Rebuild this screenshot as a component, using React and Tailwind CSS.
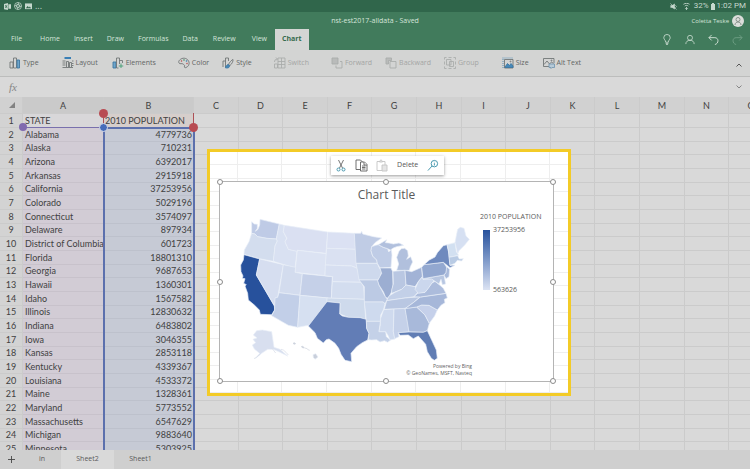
import React, { useState } from 'react';

const menus = ['File', 'Home', 'Insert', 'Draw', 'Formulas', 'Data', 'Review', 'View', 'Chart'];

const letters = ['C', 'D', 'E', 'F', 'G', 'H', 'I', 'J', 'K', 'L', 'M', 'N', 'O'];

const rows = [
  ['STATE', '2010 POPULATION'],
  ['Alabama', '4779736'],
  ['Alaska', '710231'],
  ['Arizona', '6392017'],
  ['Arkansas', '2915918'],
  ['California', '37253956'],
  ['Colorado', '5029196'],
  ['Connecticut', '3574097'],
  ['Delaware', '897934'],
  ['District of Columbia', '601723'],
  ['Florida', '18801310'],
  ['Georgia', '9687653'],
  ['Hawaii', '1360301'],
  ['Idaho', '1567582'],
  ['Illinois', '12830632'],
  ['Indiana', '6483802'],
  ['Iowa', '3046355'],
  ['Kansas', '2853118'],
  ['Kentucky', '4339367'],
  ['Louisiana', '4533372'],
  ['Maine', '1328361'],
  ['Maryland', '5773552'],
  ['Massachusetts', '6547629'],
  ['Michigan', '9883640'],
  ['Minnesota', '5303925'],
];

// [id, fill, points]
const states = [
  ['WA', '#bfcbe6', '80,35 88,42 97,43 97,55 91,64 99,58 104,45 105,28 163,42 154,87 125,85 98,80 90,72 80,70'],
  ['OR', '#d3ddee', '80,70 90,72 98,80 125,85 154,87 157,93 150,108 145,154 103,146 57,133 58,120 72,95'],
  ['CA', '#27519c', '57,134 104,147 94,195 148,288 149,300 140,314 106,313 103,300 88,285 70,270 68,250 60,228 64,224 56,220 60,206 52,205 54,198 48,185 47,165 55,150'],
  ['NV', '#d6def0', '104,147 175,164 158,262 152,263 149,288 94,195'],
  ['ID', '#d9e1f2', '163,42 178,46 175,65 185,85 180,95 190,118 216,123 210,174 145,154 150,108 157,93 154,87'],
  ['MT', '#dae0f2', '178,46 308,66 303,130 217,121 215,124 190,118 180,95 186,85 175,65'],
  ['WY', '#dce3f3', '217,121 304,131 300,197 210,187'],
  ['UT', '#d3dcee', '175,164 212,172 210,187 232,191 225,256 162,248'],
  ['CO', '#c5d0e8', '232,191 322,200 319,265 225,256'],
  ['AZ', '#c2cfe8', '162,248 225,256 218,352 190,346 140,317 149,300 149,288 150,264 158,262'],
  ['NM', '#d6e0f1', '225,256 308,264 306,275 300,349 250,346 218,352'],
  ['ND', '#dbe1f3', '308,66 388,70 392,118 305,115'],
  ['SD', '#dae1f2', '305,115 392,118 395,162 397,175 380,168 301,165'],
  ['NE', '#d7dff1', '301,165 380,168 397,175 408,217 322,215 323,200 300,197'],
  ['KS', '#d3ddef', '322,215 408,217 416,230 418,268 319,265'],
  ['OK', '#cedaec', '306,264 418,268 422,328 400,322 370,322 345,312 345,279 306,275'],
  ['TX', '#627db6', '306,275 345,279 344,312 352,318 370,322 405,323 424,328 425,355 432,370 428,390 412,398 395,410 378,430 380,455 360,451 348,433 341,415 330,400 312,387 304,389 295,399 277,385 270,368 250,348'],
  ['MN', '#c0cce5', '388,70 407,70 410,64 413,72 445,80 470,84 450,98 440,110 438,122 443,138 455,150 457,160 393,160'],
  ['IA', '#ced9ed', '393,160 457,160 462,172 470,185 465,200 458,210 402,210 397,180'],
  ['MO', '#bccae4', '402,210 458,210 462,225 470,240 478,255 487,268 480,282 475,276 418,276 418,230 410,220'],
  ['AR', '#cedaee', '418,276 475,276 480,282 475,300 467,315 466,334 424,334 422,310'],
  ['LA', '#c4d1e8', '424,334 466,334 465,345 462,365 482,365 484,380 497,390 488,397 478,392 465,396 455,389 440,390 430,389 432,370 425,355'],
  ['WI', '#bfcce6', '440,110 452,106 460,104 475,112 488,116 491,126 499,118 501,135 498,172 465,174 457,160 455,150 443,138 438,122'],
  ['IL', '#9caed2', '465,174 498,174 503,185 504,225 500,245 490,265 482,262 475,245 462,225 458,212 470,190'],
  ['MIU', '#b1c0dd', '460,104 475,95 485,89 481,98 492,99 505,102 522,99 536,106 515,110 505,114 496,120 488,116 475,112'],
  ['MIL', '#b1c0dd', '515,181 521,162 515,142 522,124 529,116 539,115 548,122 550,138 545,148 557,140 563,156 556,170 553,181'],
  ['IN', '#b9c7e2', '504,184 540,181 543,225 530,238 500,250 500,240 505,222'],
  ['OH', '#a2b3d6', '540,181 560,185 590,172 592,200 580,215 570,230 543,225'],
  ['KY', '#c3d0e8', '485,272 492,258 510,247 530,238 543,225 570,230 580,245 567,260 540,264'],
  ['TN', '#b9c7e2', '478,298 485,272 540,264 586,260 565,278 540,296'],
  ['MS', '#cfdaee', '467,325 476,299 507,297 505,365 510,387 495,390 490,378 482,365 462,365 466,345'],
  ['AL', '#c5d1e9', '507,297 540,295 553,350 552,366 520,368 522,380 509,386 505,365'],
  ['GA', '#a8b9da', '540,295 575,291 600,315 613,340 607,362 595,367 552,366'],
  ['FL', '#607db4', '520,368 552,366 595,367 607,362 620,390 634,420 637,445 628,451 619,445 607,425 602,403 580,378 565,386 550,375 525,376'],
  ['SC', '#c5d0ea', '575,291 590,285 612,286 637,300 629,318 613,340 600,315'],
  ['NC', '#a6b7d9', '540,296 565,278 586,261 663,250 667,264 658,268 660,278 648,286 637,300 612,286 590,285 575,291'],
  ['VA', '#acbcdc', '567,260 580,248 600,247 620,220 630,214 645,226 655,235 663,250 586,261'],
  ['WV', '#cbd7ed', '570,238 580,215 592,200 594,208 620,206 627,213 620,220 610,235 600,247 580,250'],
  ['MD', '#b7c6e1', '594,206 657,195 662,222 652,224 648,208 642,222 630,214 620,207'],
  ['PA', '#93a8d0', '590,172 597,164 655,157 667,175 663,188 657,195 594,206'],
  ['NJ', '#a8b9da', '665,170 674,178 672,200 663,206 657,195 663,188'],
  ['NY', '#6f8abe', '597,164 613,150 630,141 637,128 655,107 666,104 672,132 675,166 690,166 675,173 655,157'],
  ['VT', '#d2e0f1', '666,104 690,98 694,125 701,136 672,142 670,120'],
  ['MA', '#b9cbe4', '672,142 698,137 703,147 715,146 710,153 697,151 690,160 675,166'],
  ['ME', '#d6e0f2', '690,98 695,72 698,58 706,52 717,55 723,78 733,88 720,104 702,122 698,132'],
  ['AK', '#d8dfef', '85,375 95,362 112,360 140,365 147,412 165,418 188,438 165,427 145,418 128,418 110,430 92,445 104,430 88,417 82,405 92,398 84,388 96,384'],
  ['HI', '#c9cfdb', '264,434 272,431 279,441 270,448 265,442'],
];

const cell = 'border-r border-b border-[#cbcbcb] p-0 font-normal leading-[13px]';

function Icon({ children, muted }) {
  return (
    <svg viewBox="0 0 24 24" className={'h-3 w-3 shrink-0 ' + (muted ? 'text-[#a9abaa]' : 'text-[#6d7172]')} fill="none" stroke="currentColor" strokeWidth="1.7">
      {children}
    </svg>
  );
}

const icons = {
  Type: (
    <>
      <path d="M2 10h6v12H2z" />
      <path d="M9 2h6v20H9z" />
      <path d="M16 6h5v16h-5z" fill="#6fa5c9" stroke="#39749f" />
    </>
  ),
  Layout: (
    <>
      <path d="M5 2h13" stroke="#3a7fb5" strokeWidth="4" />
      <path d="M1 8h6M1 12h6M1 16h6M1 21h21M9 20V9h4v11M15 20v-9h4v9M20 8h3M20 13h3M20 17h3" />
    </>
  ),
  Elements: (
    <>
      <path d="M2 10h6v12H2z" fill="#6fa5c9" stroke="#39749f" />
      <path d="M9 22V2h6v12M9 22h4M15 7h6v5" />
      <path d="M18 13v9M13.500 18h9" stroke="#3f9970" />
    </>
  ),
  Color: (
    <>
      <path d="M13 18c-1 3 1 4 3 3 5-2 7-6 6-11C20 4 14 1 8 3 3 5 0 9 2 12s6 0 8 2c1 1 4 2 3 4z" />
      <circle cx="7" cy="8" r="1" stroke="#ba5959" />
      <circle cx="12" cy="6" r="1" stroke="#4f9a72" />
      <circle cx="17" cy="8" r="1" stroke="#4584b4" />
      <circle cx="18" cy="13" r="1" stroke="#ba5959" />
    </>
  ),
  Style: (
    <>
      <path d="M2 20V8h5M7 20V2h6v6" />
      <path d="M22 5c-2 0-8 7-9 10l3 2c3-2 7-9 6-12z" />
      <path d="M12 15c-3 0-3 5-6 6 4 2 10 1 9-4z" fill="#4689b9" stroke="#39749f" />
    </>
  ),
  Switch: (
    <>
      <path d="M8 2h14v20H8zM8 9h14M8 15h14M15 2v20" />
      <path d="M1 22h6v-8H1zM1 10c0-4 2-6 6-6M4 1l3 3-3 3" />
    </>
  ),
  Forward: (
    <>
      <path d="M2 2h12v12H2z" fill="#b9bbba" />
      <path d="M18 9h4v13H10v-5" />
    </>
  ),
  Backward: (
    <>
      <path d="M2 2h11v5H7v7H2z" fill="#b9bbba" />
      <path d="M10 9h12v13H10z" />
    </>
  ),
  Group: (
    <>
      <path d="M5 5h9v11H5zM11 9h8v10h-8z" />
      <path d="M1 5V1h4M19 1h4v4M23 19v4h-4M5 23H1v-4M9 1h6M9 23h6M1 9v6M23 9v6" />
    </>
  ),
  Size: (
    <>
      <path d="M2 22V2M1 2h21" stroke="#4584b4" strokeDasharray="2 2" />
      <path d="M5 5h17v17H5z" />
      <path d="M6 20l5-7 4 4 3-4 4 5v3H6z" fill="#4689b9" stroke="#39749f" />
      <circle cx="17" cy="9" r="1" />
    </>
  ),
  'Alt Text': (
    <>
      <path d="M12 19H1V3h21v9" />
      <path d="M2 15l6-7 5 6 4-4 4 3" />
      <circle cx="17" cy="7" r="1" />
      <path d="M12 14h11v7h-5l-2 2v-2h-4z" fill="#b8cbd8" stroke="#7396b0" />
    </>
  ),
};

const toolGroups = [['Type', 'Layout'], ['Elements'], ['Color', 'Style'], ['Switch'], ['Forward', 'Backward', 'Group'], ['Size', 'Alt Text']];
const groupClass = ['gap-[23px]', 'pl-[14px]', 'gap-[13px] pl-[22px]', 'pl-[22px]', 'gap-[13px] pl-[22px]', 'gap-[14px] pl-[23px]'];
const disabledTools = ['Switch', 'Forward', 'Backward', 'Group'];

function StatusBar() {
  return (
    <div className="flex h-3 items-center justify-between bg-[#30664b] px-1 text-[#c5d8cd]">
      <div className="flex items-center gap-[3px]">
        <svg viewBox="0 0 16 16" className="h-[7px] w-[7px]" fill="currentColor"><path d="M0 2l9-2v16l-9-2zM10 3h6v10h-6zM2 5l2 3-2 3h2l1-2 1 2h2L6 8l2-3H6L5 7 4 5z" fillRule="evenodd" /></svg>
        <svg viewBox="0 0 16 16" className="h-2 w-2" fill="none" stroke="currentColor" strokeWidth="1.500"><circle cx="8" cy="8" r="7" /><circle cx="8" cy="8" r="3" /><path d="M8 1l3 7M15 8l-7 3M8 15L5 8M1 8l7-3" /></svg>
        <svg viewBox="0 0 16 16" className="h-[7px] w-[7px]"><path d="M0 1h16v13H0z" fill="currentColor" /><path d="M2 12l4-5 3 3 2-2 3 4z" fill="#30664b" /></svg>
        <span className="text-[9px] leading-3">...</span>
      </div>
      <div className="flex items-center gap-0.5 font-[Roboto,sans-serif] text-[8px] leading-3">
        <svg viewBox="0 0 16 16" className="mr-1 h-[7px] w-[7px]" fill="currentColor"><path d="M1 5h4l6-4v14l-6-4H1z" /><path d="M1 1l14 14M12 5l3 3-3 3" stroke="currentColor" strokeWidth="1.500" fill="none" /></svg>
        <svg viewBox="0 0 16 16" className="mr-0.5 h-[7px] w-[7px]" fill="none" stroke="currentColor" strokeWidth="2"><path d="M1 3c4-3 10-3 14 0M4 7c2-2 6-2 8 0M8 9v6M5 12l3 3 3-3" /></svg>
        <span>32%</span>
        <svg viewBox="0 0 8 14" className="h-[7px] w-1" fill="currentColor"><path d="M2 0h4v2h2v12H0V2h2z" /></svg>
        <span>1:02 PM</span>
      </div>
    </div>
  );
}

function menuClass(name) {
  if (name === 'File') return 'pr-[11px] pl-[7px]';
  if (name === 'Review' || name === 'View') return 'px-2';
  return 'px-[7px]';
}

function Header() {
  const [active, setActive] = useState('Chart');
  return (
    <header className="bg-[#417b5c] text-[#d5e4da]">
      <StatusBar />
      <div className="grid h-[17px] grid-cols-[1fr_auto_1fr] items-center text-[7px] leading-[10px]">
        <span />
        <span>nst-est2017-alldata - Saved</span>
        <div className="flex items-center justify-end gap-[3px] pr-1.5">
          <span className="text-[6px]">Coletta Teske</span>
          <svg viewBox="0 0 24 24" className="h-3 w-3" fill="none" stroke="#87918a" strokeWidth="2"><circle cx="12" cy="12" r="12" fill="#dcdedb" stroke="none" /><circle cx="12" cy="9" r="4" /><path d="M6 20c0-8 12-8 12 0" /></svg>
        </div>
      </div>
      <div className="flex h-[21px] items-stretch justify-between pr-[7px] pl-1">
        <nav className="flex text-[7px]">
          {menus.map((m) => (
            <button
              key={m}
              onClick={() => setActive(m)}
              className={menuClass(m) + (active === m ? ' bg-[#d4d6d4] font-bold text-[#356b4d]' : '')}
            >
              {m}
            </button>
          ))}
        </nav>
        <div className="flex items-center gap-[13px]">
          <button aria-label="Tell me">
            <svg viewBox="0 0 20 24" className="h-[11px] w-[10px]" fill="none" stroke="currentColor" strokeWidth="1.700"><path d="M7 18c0-5-4-6-4-10a7 7 0 0114 0c0 4-4 5-4 10zM7 21h6M8 23h4" /></svg>
          </button>
          <button aria-label="Share">
            <svg viewBox="0 0 24 24" className="h-[11px] w-[10px]" fill="none" stroke="currentColor" strokeWidth="1.800"><circle cx="12" cy="8" r="6" /><path d="M2 23c0-6 4-9 10-9s10 3 10 9" /></svg>
          </button>
          <button aria-label="Undo">
            <svg viewBox="0 0 24 24" className="h-[11px] w-[11px]" fill="none" stroke="currentColor" strokeWidth="2"><path d="M8 2L2 8l6 6M2 8h13c9 0 9 13 0 15" /></svg>
          </button>
          <button aria-label="Redo" className="text-[#6f9f84]">
            <svg viewBox="0 0 24 24" className="h-[11px] w-[11px]" fill="none" stroke="currentColor" strokeWidth="2"><path d="M16 2l6 6-6 6M22 8H9c-9 0-9 13 0 15" /></svg>
          </button>
        </div>
      </div>
    </header>
  );
}

function Ribbon() {
  return (
    <div className="flex h-[27px] items-center border-b border-[#bcbdbc] bg-[#d3d4d3] pr-2 pl-[9px] text-[7px] text-[#626564]">
      {toolGroups.map((group, i) => (
        <div key={i} className={'flex shrink-0 ' + groupClass[i]}>
          {group.map((name) => {
            const muted = disabledTools.includes(name);
            return (
              <button key={name} disabled={muted} className={'flex items-center gap-0.5 ' + (muted ? 'text-[#a3a5a4]' : '')}>
                <Icon muted={muted}>{icons[name]}</Icon>
                {name}
              </button>
            );
          })}
        </div>
      ))}
      <button aria-label="Collapse ribbon" className="ml-auto pt-1 text-[#555]">
        <svg viewBox="0 0 12 8" className="h-1 w-1.5" fill="none" stroke="currentColor" strokeWidth="2"><path d="M1 7l5-5 5 5" /></svg>
      </button>
    </div>
  );
}

function Handle({ className }) {
  return <span className={'absolute h-1.5 w-1.5 rounded-full border border-[#8b8b8b] bg-white ' + className} />;
}

function MapChart() {
  return (
    <div className="absolute top-[84px] left-[219px] h-[201px] w-[335px] border border-[#b4b4b4] bg-white">
      <h2 className="pt-[5px] text-center text-[12px] leading-4 text-[#5a5a5a]">Chart Title</h2>
      <div className="flex pt-[7px] pl-[5px]">
        <svg viewBox="0 0 750 465" className="h-[155px] w-[250px]" stroke="#e8eff8" strokeWidth="2" strokeLinejoin="round">
          {states.map(([id, fill, points]) => (
            <polygon key={id} points={points} fill={fill} />
          ))}
          <path d="M204 400l4-2 4 3-4 2zM229 410l4-1 5 4-4 1zM239 414l8 2M247 418l7 3" fill="#ccd2dd" stroke="#ccd2dd" />
          <path d="M168 418l7 2 8 7 7 8M106 432l-12 10-7 4M142 416l10 13" fill="none" stroke="#d5dae6" />
        </svg>
        <div className="pt-[2px] pl-[5px] text-[7px] leading-[10px] text-[#5a5a5a]">
          <div className="whitespace-nowrap">2010 POPULATION</div>
          <div className="mt-[3px] flex gap-[3px] pl-[3px]">
            <div className="mt-[5px] h-[60px] w-[7px] shrink-0 bg-linear-to-b from-[#27519c] to-[#dce3f3]" />
            <div className="flex h-[70px] flex-col justify-between">
              <span>37253956</span>
              <span>563626</span>
            </div>
          </div>
        </div>
      </div>
      <p className="absolute right-[81px] bottom-1 text-right text-[5px] leading-[7px] text-[#5f5f5f]">
        Powered by Bing
        <br />© GeoNames, MSFT, Navteq
      </p>
      <Handle className="-top-[3px] -left-[3px]" />
      <Handle className="-top-[3px] left-[163px]" />
      <Handle className="-top-[3px] -right-[3px]" />
      <Handle className="top-[97px] -left-[3px]" />
      <Handle className="top-[97px] -right-[3px]" />
      <Handle className="-bottom-[3px] -left-[3px]" />
      <Handle className="-bottom-[3px] left-[163px]" />
      <Handle className="-right-[3px] -bottom-[3px]" />
    </div>
  );
}

function ChartToolbar() {
  return (
    <div className="absolute top-[59px] left-[331px] flex h-[19px] w-[113px] items-center justify-between bg-white px-[5px] text-[7px] text-[#555] shadow-[0_1px_3px_rgba(0,0,0,0.4)]">
      <button aria-label="Cut">
        <svg viewBox="0 0 20 26" className="h-[13px] w-[10px]" fill="none" stroke="#666" strokeWidth="1.800"><path d="M5 2l8 16M15 2L7 18" /><circle cx="5" cy="21" r="3" stroke="#3b91a8" /><circle cx="15" cy="21" r="3" stroke="#3b91a8" /></svg>
      </button>
      <button aria-label="Copy">
        <svg viewBox="0 0 26 26" className="h-[13px] w-[13px]" fill="#fff" stroke="#606060" strokeWidth="1.800"><path d="M2 2h9l4 4v15H2z" /><path d="M11 6h8l5 5v13H11z" /><path d="M18 6v6h6M14 14h7M14 17h7M14 20h7" /></svg>
      </button>
      <button aria-label="Paste" disabled>
        <svg viewBox="0 0 24 26" className="h-[13px] w-[12px]" fill="#fff" stroke="#c4c4c4" strokeWidth="1.800"><path d="M2 5h16v18H2z" /><path d="M7 6c0-5 6-5 6 0zM12 12h10v12H12z" fill="#e5e5e5" /></svg>
      </button>
      <button>Delete</button>
      <button aria-label="Smart lookup">
        <svg viewBox="0 0 26 26" className="h-[13px] w-[12px]" fill="none" stroke="#3b91a8" strokeWidth="2"><circle cx="16" cy="9" r="7" /><path d="M11 14L2 24M16 8v5M16 5v1" /></svg>
      </button>
    </div>
  );
}

function Sheet() {
  return (
    <main className="relative h-[353px] overflow-hidden bg-[#d9d9d9] text-[#414141]">
      <table className="w-[774px] table-fixed border-separate border-spacing-0 font-[Lato,sans-serif] text-[9px]">
        <colgroup>
          <col className="w-[23px]" />
          <col className="w-[81px]" />
          <col className="w-[90px]" />
          {letters.map((l, i) => (
            <col key={l} className={i % 5 === 1 || i % 5 === 3 ? 'w-[44px]' : 'w-[45px]'} />
          ))}
        </colgroup>
        <thead>
          <tr className="h-[17px] bg-[#d1d1d1] text-[9px]">
            <th className={cell}>
              <svg viewBox="0 0 8 8" className="ml-[9px] h-1.5 w-1.5" fill="#828282"><path d="M8 0v8H0z" /></svg>
            </th>
            <th className={cell + ' bg-[#cacaca]'}>A</th>
            <th className={cell + ' bg-[#cacaca]'}>B</th>
            {letters.map((l) => (
              <th key={l} className={cell}>{l}</th>
            ))}
          </tr>
        </thead>
        <tbody>
          {rows.map(([name, value], i) => (
            <tr key={name} className={i % 3 === 2 ? 'h-[13px]' : 'h-[14px]'}>
              <th className={cell + ' bg-[#d3d3d3]'}>
                <div className="h-3 leading-3">{i + 1}</div>
              </th>
              <td className={cell + (i ? ' border-b-[#c8c2cb] bg-[#d2ccd5]' : ' bg-[#d8d7d9]')}>
                <div className="h-3 overflow-hidden pl-0.5 leading-3 whitespace-nowrap">{name}</div>
              </td>
              <td className={cell + (i ? ' border-b-[#bdc1cc] bg-[#c6cad5] text-right' : ' bg-[#d6cecb]')}>
                <div className="h-3 pr-px pl-px leading-3 whitespace-nowrap">{value}</div>
              </td>
              {letters.map((l) => (
                <td key={l} className={cell} />
              ))}
            </tr>
          ))}
        </tbody>
      </table>

      {/* range selection lines and drag handles */}
      <div className="absolute top-[30px] left-[23px] h-px w-[81px] bg-[#7970ad]" />
      <div className="absolute top-[30px] left-[103px] h-[340px] w-[92px] border-2 border-[#5c70ad]" />
      <div className="absolute top-[16px] left-[103px] h-[14px] w-[91px] border-x border-[#ad5056]" />
      <span className="absolute top-[26px] left-[19px] h-2 w-2 rounded-full bg-[#806aaf]" />
      <span className="absolute top-[12px] left-[99px] h-[9px] w-[9px] rounded-full bg-[#b84b52]" />
      <span className="absolute top-[26px] left-[99px] h-[9px] w-[9px] rounded-full border border-[#d8dcea] bg-[#466cba]" />
      <span className="absolute top-[26px] left-[189px] h-[9px] w-[9px] rounded-full bg-[#b84b52]" />

      {/* highlighted chart area */}
      <div className="absolute top-[52px] left-[207px] h-[247px] w-[364px] overflow-hidden border-[3px] border-[#f3cb27] bg-white">
        <div className="grid h-full w-[402px] -translate-x-[17px] grid-cols-9 grid-rows-[repeat(18,1fr)]">
          {Array.from({ length: 162 }, (_, i) => (
            <div key={i} className="border-r border-b border-[#eeeeee]" />
          ))}
        </div>
      </div>
      <MapChart />
      <ChartToolbar />
    </main>
  );
}

const App = () => {
  const [sheet, setSheet] = useState('Sheet2');

  return (
    <div className="w-full overflow-hidden bg-[#d9d9d9] font-['Open_Sans',sans-serif]">
      <Header />
      <Ribbon />
      <div className="flex h-5 items-center justify-between pr-2 pl-[9px] text-[#858585]">
        <label htmlFor="formula" className="font-['Liberation_Serif',serif] text-[11px] leading-4 italic">fx</label>
        <input id="formula" type="text" className="mx-2 h-4 flex-1 bg-transparent text-[8px] outline-none" />
        <button aria-label="Expand formula bar">
          <svg viewBox="0 0 12 8" className="h-1 w-1.5" fill="none" stroke="currentColor" strokeWidth="2"><path d="M1 1l5 5 5-5" /></svg>
        </button>
      </div>
      <Sheet />
      <footer className="flex h-[19px] bg-[#cfcfcf] text-[7px] text-[#5a5a5a]">
        <button aria-label="Add sheet" className="w-[23px]">
          <svg viewBox="0 0 8 8" className="mx-auto h-[7px] w-[7px]" stroke="#444" strokeWidth="1"><path d="M4 0v8M0 4h8" /></svg>
        </button>
        {['in', 'Sheet2', 'Sheet1'].map((name) => (
          <button
            key={name}
            onClick={() => setSheet(name)}
            className={(name === 'in' ? 'w-[38px]' : 'w-[53px]') + (sheet === name ? ' bg-[#d9d9d9]' : '')}
          >
            {name}
          </button>
        ))}
      </footer>
    </div>
  );
};

export default App;
